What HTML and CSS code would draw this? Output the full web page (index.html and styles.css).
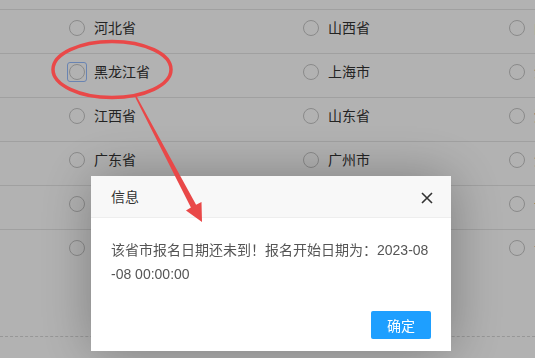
FILE: index.html
```html
<!DOCTYPE html>
<html lang="zh-CN">
<head>
    <meta charset="UTF-8">
    <meta name="viewport" content="width=device-width, initial-scale=1.0">
    <title>报名省市选择</title>
    <link rel="stylesheet" href="styles.css">
</head>
<body>
    <div class="area-list">
        <div class="area-row">
            <label class="area-item"><span class="radio"></span>河北省</label>
            <label class="area-item"><span class="radio"></span>山西省</label>
            <label class="area-item"><span class="radio"></span>内蒙古</label>
        </div>
        <div class="area-row">
            <label class="area-item"><span class="radio focused"></span>黑龙江省</label>
            <label class="area-item"><span class="radio"></span>上海市</label>
            <label class="area-item"><span class="radio"></span>江苏省</label>
        </div>
        <div class="area-row">
            <label class="area-item"><span class="radio"></span>江西省</label>
            <label class="area-item"><span class="radio"></span>山东省</label>
            <label class="area-item"><span class="radio"></span>河南省</label>
        </div>
        <div class="area-row">
            <label class="area-item"><span class="radio"></span>广东省</label>
            <label class="area-item"><span class="radio"></span>广州市</label>
            <label class="area-item"><span class="radio"></span>海南省</label>
        </div>
        <div class="area-row">
            <label class="area-item"><span class="radio"></span>四川省</label>
            <label class="area-item"><span class="radio"></span>贵州省</label>
            <label class="area-item"><span class="radio"></span>云南省</label>
        </div>
        <div class="area-row">
            <label class="area-item"><span class="radio"></span>陕西省</label>
            <label class="area-item"><span class="radio"></span>甘肃省</label>
            <label class="area-item"><span class="radio"></span>青海省</label>
        </div>
        <div class="list-foot"></div>
    </div>

    <!-- 遮罩 + 提示框 -->
    <div class="layer-shade"></div>
    <div class="layer-dialog">
        <div class="layer-title">
            信息
            <span class="layer-close">
                <svg width="12" height="12" viewBox="0 0 12 12"><path d="M1 1 L11 11 M11 1 L1 11" stroke="#333" stroke-width="1.6" fill="none"/></svg>
            </span>
        </div>
        <div class="layer-content">该省市报名日期还未到！报名开始日期为：2023-08-08 00:00:00</div>
        <div class="layer-btns">
            <button class="btn-ok">确定</button>
        </div>
    </div>

    <!-- 标注 -->
    <svg class="mark" width="535" height="358" viewBox="0 0 535 358">
        <ellipse cx="112" cy="69.5" rx="59" ry="28" fill="none" stroke="#e94848" stroke-width="3.5"/>
        <polygon points="136.7,96.6 196.1,204.7 201.5,202 202,222 186,210.5 190.9,207.5 135.3,97.4" fill="#e94848"/>
    </svg>
</body>
</html>
```

FILE: styles.css
```css
body { margin: 0; width: 535px; height: 358px; overflow: hidden; background: #fff; font-family: "Liberation Sans", "Noto Sans CJK SC", sans-serif; font-size: 14px; color: #333; }
.area-list { padding-top: 9px; }
.area-row { display: grid; grid-template-columns: 234px 206px 1fr; height: 44px; box-sizing: border-box; padding: 9px 0 0 69px; border-top: 1px solid #e6e6e6; white-space: nowrap; }
.area-row:last-of-type { border-bottom: 1px solid #e6e6e6; }
.area-item { display: flex; align-items: center; gap: 9px; height: 18px; line-height: 18px; }
.radio { width: 14px; height: 14px; border: 1px solid #c6c6c6; border-radius: 50%; flex-shrink: 0; position: relative; }
.radio.focused::after { content: ""; position: absolute; left: -3px; top: -3px; right: -3px; bottom: -3px; border: 1.5px solid #97beff; border-radius: 3px; }
.list-foot { margin-top: 63px; border-top: 1px dashed #d8d8d8; }

.layer-shade { position: fixed; inset: 0; background: rgba(0, 0, 0, 0.3); }
.layer-dialog { position: fixed; left: 91px; top: 176px; width: 360px; background: #fff; box-shadow: 1px 1px 50px rgba(0, 0, 0, 0.3); }
.layer-title { position: relative; height: 41px; line-height: 42px; padding-left: 20px; background: #f8f8f8; border-bottom: 1px solid #eee; color: #333; }
.layer-close { position: absolute; right: 18px; top: 16px; width: 12px; height: 12px; line-height: 0; }
.layer-content { padding: 20px; line-height: 24px; color: #555; word-break: break-all; }
.layer-btns { display: flex; justify-content: flex-end; padding: 5px 20px 12px; }
.btn-ok { height: 28px; padding: 0 16px; border: none; border-radius: 2px; background: #1e9fff; color: #fff; font-family: inherit; font-size: 14px; cursor: pointer; }

.mark { position: fixed; left: 0; top: 0; pointer-events: none; }
```
